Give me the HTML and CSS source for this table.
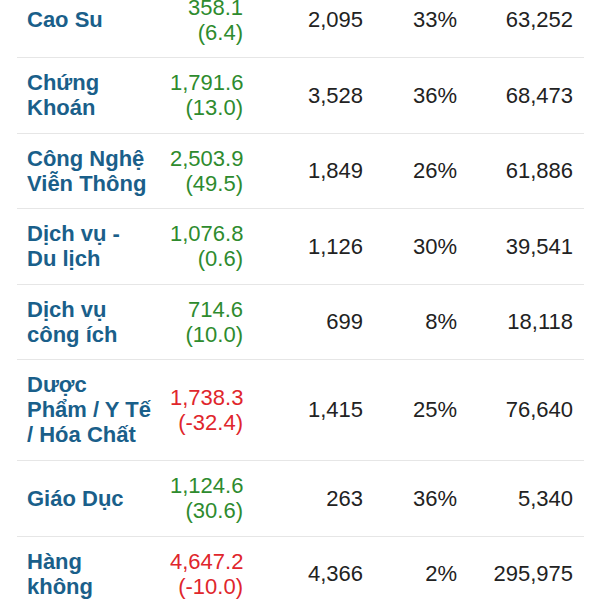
FILE: index.html
```html
<!DOCTYPE html>
<html lang="vi">
<head>
<meta charset="utf-8">
<title>Ngành</title>
<link rel="stylesheet" href="styles.css">
</head>
<body>
<table class="sectors">
  <colgroup>
    <col class="c-name"><col class="c-index"><col class="c-num"><col class="c-pct"><col class="c-vol">
  </colgroup>
  <tbody>
    <tr>
      <td class="name">Cao Su</td>
      <td class="idx up">358.1<br>(6.4)</td>
      <td>2,095</td><td>33%</td><td class="vol">63,252</td>
    </tr>
    <tr>
      <td class="name">Chứng<br>Khoán</td>
      <td class="idx up">1,791.6<br>(13.0)</td>
      <td>3,528</td><td>36%</td><td class="vol">68,473</td>
    </tr>
    <tr>
      <td class="name">Công Nghệ<br>Viễn Thông</td>
      <td class="idx up">2,503.9<br>(49.5)</td>
      <td>1,849</td><td>26%</td><td class="vol">61,886</td>
    </tr>
    <tr>
      <td class="name">Dịch vụ -<br>Du lịch</td>
      <td class="idx up">1,076.8<br>(0.6)</td>
      <td>1,126</td><td>30%</td><td class="vol">39,541</td>
    </tr>
    <tr>
      <td class="name">Dịch vụ<br>công ích</td>
      <td class="idx up">714.6<br>(10.0)</td>
      <td>699</td><td>8%</td><td class="vol">18,118</td>
    </tr>
    <tr>
      <td class="name">Dược<br>Phẩm / Y Tế<br>/ Hóa Chất</td>
      <td class="idx down">1,738.3<br>(-32.4)</td>
      <td>1,415</td><td>25%</td><td class="vol">76,640</td>
    </tr>
    <tr>
      <td class="name">Giáo Dục</td>
      <td class="idx up">1,124.6<br>(30.6)</td>
      <td>263</td><td>36%</td><td class="vol">5,340</td>
    </tr>
    <tr>
      <td class="name">Hàng<br>không</td>
      <td class="idx down">4,647.2<br>(-10.0)</td>
      <td>4,366</td><td>2%</td><td class="vol">295,975</td>
    </tr>
  </tbody>
</table>
</body>
</html>
```
FILE: styles.css
```css
html, body {
  margin: 0;
  padding: 0;
  background: #ffffff;
  overflow: hidden;
}
body {
  font-family: "Liberation Sans", Arial, sans-serif;
  font-size: 22px;
  line-height: 25px;
  color: #222222;
}
.sectors {
  margin: -17.5px 0 0 17px;
  width: 567px;
  border-collapse: collapse;
  table-layout: fixed;
}
.c-name { width: 143px; }
.c-index { width: 93px; }
.c-num { width: 120px; }
.c-pct { width: 94px; }
.c-vol { width: 117px; }
.sectors td {
  padding: 12px 10px 12.6px 10px;
  border-bottom: 1px solid #e6e6e6;
  text-align: right;
  vertical-align: middle;
  white-space: nowrap;
}
.sectors td.name {
  text-align: left;
  font-weight: bold;
  color: #1a5f8a;
}
.sectors td.vol { padding-right: 11px; }
.up { color: #2e8b2e; }
.down { color: #e0262c; }
```
